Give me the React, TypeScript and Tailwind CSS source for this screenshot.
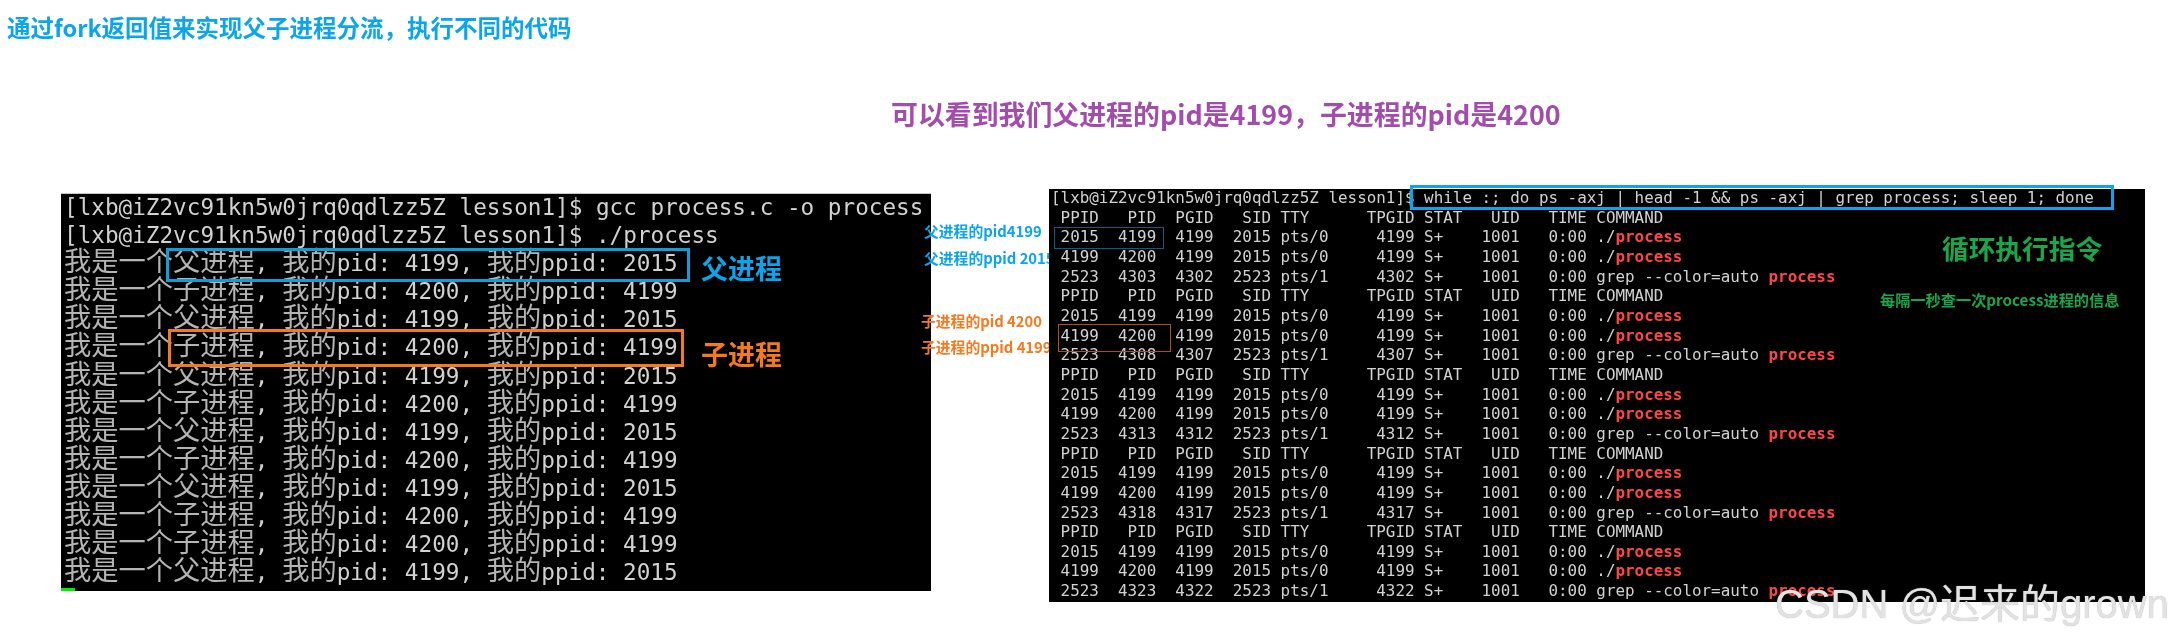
function ZH({ children }: { children: string }) {
  return <span className="text-[27.28px] leading-[0] text-[#b4b4b4] font-['Noto_Sans_CJK_SC',sans-serif]">{children}</span>;
}

function ParentLine() {
  return (
    <div className="h-[28.1px] whitespace-pre">
      <ZH>我是一个父进程</ZH>, <ZH>我的</ZH>pid: 4199, <ZH>我的</ZH>ppid: 2015
    </div>
  );
}
function ChildLine() {
  return (
    <div className="h-[28.1px] whitespace-pre">
      <ZH>我是一个子进程</ZH>, <ZH>我的</ZH>pid: 4200, <ZH>我的</ZH>ppid: 4199
    </div>
  );
}

const procRows = [
  ['2015', '4199'],
  ['4199', '4200'],
];
const grepRows = [
  ['4303', '4302'],
  ['4308', '4307'],
  ['4313', '4312'],
  ['4318', '4317'],
  ['4323', '4322'],
];

function Header() {
  return <div className="h-[19.67px] whitespace-pre">{' PPID   PID  PGID   SID TTY      TPGID STAT   UID   TIME COMMAND'}</div>;
}
function Red({ children }: { children: string }) {
  return <span className="font-bold text-[#ff4545]">{children}</span>;
}
function ProcRow({ ppid, pid }: { ppid: string; pid: string }) {
  return (
    <div className="h-[19.67px] whitespace-pre">
      {` ${ppid}  ${pid}  4199  2015 pts/0     4199 S+    1001   0:00 ./`}
      <Red>process</Red>
    </div>
  );
}
function GrepRow({ pid, pgid }: { pid: string; pgid: string }) {
  return (
    <div className="h-[19.67px] whitespace-pre">
      {` 2523  ${pid}  ${pgid}  2523 pts/1     ${pgid} S+    1001   0:00 grep --color=auto `}
      <Red>process</Red>
    </div>
  );
}

export default function App() {
  return (
    <div className="relative h-[641px] w-[2174px] overflow-hidden bg-white font-['Noto_Sans_CJK_SC',sans-serif] blur-[0.4px]">
      <div className="pl-[7px] pt-[10px] h-[100px] text-[23.5px] leading-[34px] font-bold text-[#0aa5ea] whitespace-nowrap">
        通过fork返回值来实现父子进程分流，执行不同的代码
      </div>
      <div className="pl-[891px] h-[89px] text-[26.9px] leading-[28px] font-bold text-[#a24cab] whitespace-nowrap">
        可以看到我们父进程的pid是4199，子进程的pid是4200
      </div>
      <div className="flex items-start pl-[61px]">
        {/* left terminal */}
        <div className="relative mt-[4px] h-[398px] w-[870px] shrink-0 border-t border-[#c8c8c8] bg-black pl-[3px] font-['DejaVu_Sans_Mono',monospace] text-[22.66px] leading-[26.5px] text-[#d2d2d2]">
          <div className="h-[28.1px] whitespace-pre">[lxb@iZ2vc91kn5w0jrq0qdlzz5Z lesson1]$ gcc process.c -o process</div>
          <div className="h-[28.1px] whitespace-pre">[lxb@iZ2vc91kn5w0jrq0qdlzz5Z lesson1]$ ./process</div>
          <ParentLine />
          <ChildLine />
          <ParentLine />
          <ChildLine />
          <ParentLine />
          <ChildLine />
          <ParentLine />
          <ChildLine />
          <ParentLine />
          <ChildLine />
          <ChildLine />
          <ParentLine />
          <div className="absolute bottom-0 left-0 h-[3px] w-[14px] bg-[#00f000]" />
          <div className="absolute left-[105px] top-[54px] h-[34px] w-[524px] border-[3px] border-[#0f9ed8]" />
          <div className="absolute left-[107px] top-[135px] h-[38px] w-[516px] border-[3px] border-[#f47a1f]" />
          <div className="absolute left-[640px] top-[57px] font-['Noto_Sans_CJK_SC',sans-serif] text-[27px] font-bold leading-[34px] text-[#0aa5ea]">父进程</div>
          <div className="absolute left-[640px] top-[143px] font-['Noto_Sans_CJK_SC',sans-serif] text-[27px] font-bold leading-[34px] text-[#f47a1f]">子进程</div>
          <div className="absolute left-[863px] top-[27px] flex flex-col gap-[7px] font-['Noto_Sans_CJK_SC',sans-serif] text-[14.8px] font-bold leading-[20px] text-[#0aa5ea] whitespace-nowrap">
            <div>父进程的pid4199</div>
            <div>父进程的ppid 2015</div>
          </div>
          <div className="absolute left-[860px] top-[117px] flex flex-col gap-[6px] font-['Noto_Sans_CJK_SC',sans-serif] text-[14.8px] font-bold leading-[20px] text-[#f47a1f] whitespace-nowrap">
            <div>子进程的pid 4200</div>
            <div>子进程的ppid 4199</div>
          </div>
        </div>
        {/* right terminal */}
        <div className="relative ml-[118px] h-[413px] w-[1096px] shrink-0 bg-black pl-[2px] font-['DejaVu_Sans_Mono',monospace] text-[15.9px] leading-[18px] text-[#d2d2d2]">
          <div className="h-[19.67px] whitespace-pre">[lxb@iZ2vc91kn5w0jrq0qdlzz5Z lesson1]$ while :; do ps -axj | head -1 &amp;&amp; ps -axj | grep process; sleep 1; done</div>
          {grepRows.map((g) => (
            <div key={g[0]}>
              <Header />
              {procRows.map((r) => (
                <ProcRow key={r[1]} ppid={r[0]} pid={r[1]} />
              ))}
              <GrepRow pid={g[0]} pgid={g[1]} />
            </div>
          ))}
          <div className="absolute left-[361px] top-[-4px] h-[25px] w-[704px] border-[3px] border-[#0aa5ea]" />
          <div className="absolute left-[5px] top-[38px] h-[22px] w-[110px] border border-[#0c5d80]" />
          <div className="absolute left-[9px] top-[135px] h-[28px] w-[113px] border border-[#a05520]" />
          <div className="absolute left-[893px] top-[39px] font-['Noto_Sans_CJK_SC',sans-serif] text-[26.7px] font-bold leading-[40px] text-[#1aa64a] whitespace-nowrap">循环执行指令</div>
          <div className="absolute left-[831px] top-[98px] font-['Noto_Sans_CJK_SC',sans-serif] text-[15.2px] font-bold leading-[24px] text-[#1aa64a] whitespace-nowrap">每隔一秒查一次process进程的信息</div>
        </div>
      </div>
      <div className="absolute left-[1775px] top-[580px] font-['Liberation_Sans','Noto_Sans_CJK_SC',sans-serif] text-[40px] leading-[48px] text-[#e2e2e2] whitespace-nowrap [text-shadow:0_0_1px_#a8a8a8]">
        CSDN @迟来的grown
      </div>
    </div>
  );
}
